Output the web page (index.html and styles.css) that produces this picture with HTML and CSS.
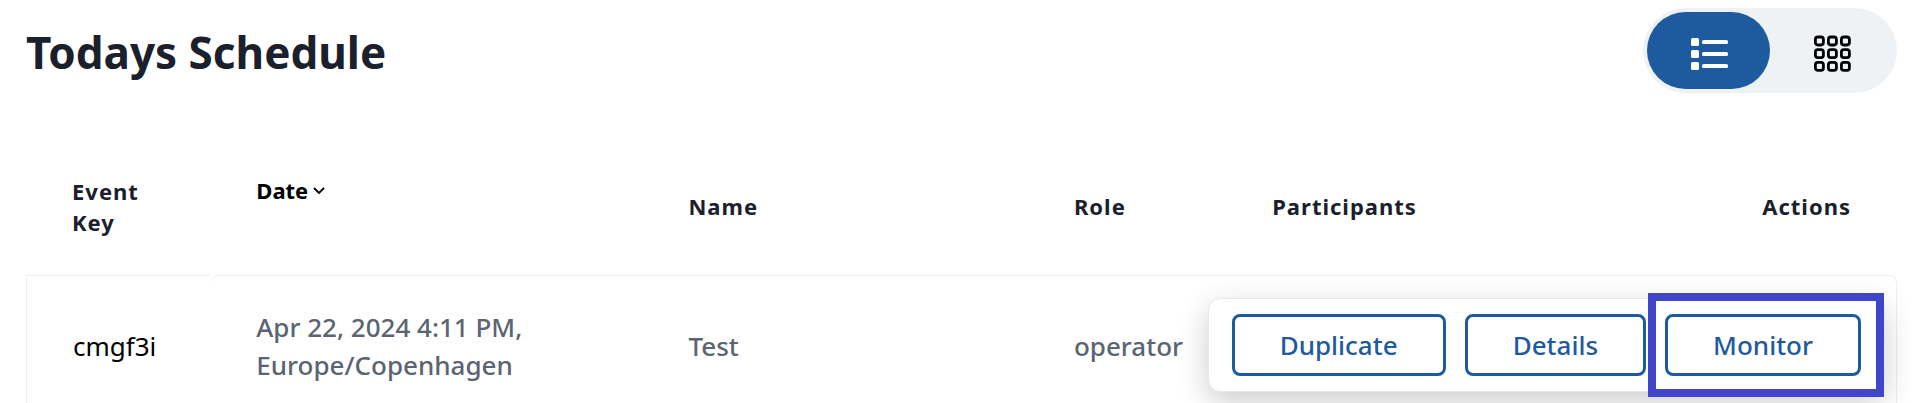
FILE: index.html
```html
<!DOCTYPE html>
<html lang="en">
<head>
    <meta charset="UTF-8">
    <meta name="viewport" content="width=device-width, initial-scale=1.0">
    <title>Todays Schedule</title>
    <link rel="stylesheet" href="styles.css">
</head>
<body>
    <div class="page">
        <header class="page-header">
            <h1>Todays Schedule</h1>
            <div class="view-toggle">
                <button type="button" class="view-btn active" aria-label="List view">
                    <svg width="38" height="38" viewBox="0 0 38 38" fill="currentColor">
                        <rect x="1" y="3" width="8" height="8" rx="1.5"/>
                        <rect x="1" y="15" width="8" height="8" rx="1.5"/>
                        <rect x="1" y="27" width="8" height="8" rx="1.5"/>
                        <rect x="12" y="5" width="26" height="4" rx="1.5"/>
                        <rect x="12" y="17" width="26" height="4" rx="1.5"/>
                        <rect x="12" y="29" width="26" height="4" rx="1.5"/>
                    </svg>
                </button>
                <button type="button" class="view-btn" aria-label="Grid view">
                    <svg width="38" height="38" viewBox="0 0 38 38" fill="none" stroke="currentColor" stroke-width="2.8">
                        <rect x="2.4" y="2" width="8" height="8" rx="2.4"/>
                        <rect x="15.4" y="2" width="8" height="8" rx="2.4"/>
                        <rect x="28.4" y="2" width="8" height="8" rx="2.4"/>
                        <rect x="2.4" y="14.7" width="8" height="8" rx="2.4"/>
                        <rect x="15.4" y="14.7" width="8" height="8" rx="2.4"/>
                        <rect x="28.4" y="14.7" width="8" height="8" rx="2.4"/>
                        <rect x="2.4" y="27.4" width="8" height="8" rx="2.4"/>
                        <rect x="15.4" y="27.4" width="8" height="8" rx="2.4"/>
                        <rect x="28.4" y="27.4" width="8" height="8" rx="2.4"/>
                    </svg>
                </button>
            </div>
        </header>

        <table class="schedule">
            <colgroup>
                <col class="col-key">
                <col class="col-date">
                <col class="col-name">
                <col class="col-role">
                <col class="col-participants">
                <col class="col-actions">
            </colgroup>
            <thead>
                <tr>
                    <th scope="col">Event Key</th>
                    <th scope="col" class="sorted">
                        <button type="button" class="sort-btn">Date
                            <svg width="12" height="8" viewBox="0 0 12 8" fill="none" stroke="currentColor" stroke-width="1.8">
                                <path d="M1 1l5 5 5-5"/>
                            </svg>
                        </button>
                    </th>
                    <th scope="col">Name</th>
                    <th scope="col">Role</th>
                    <th scope="col">Participants</th>
                    <th scope="col" class="actions-head">Actions</th>
                </tr>
            </thead>
            <tbody>
                <tr>
                    <td class="event-key">cmgf3i</td>
                    <td class="date">Apr 22, 2024 4:11 PM,<br>Europe/Copenhagen</td>
                    <td>Test</td>
                    <td>operator</td>
                    <td></td>
                    <td class="actions">
                        <div class="action-menu">
                            <button type="button" class="btn">Duplicate</button>
                            <button type="button" class="btn">Details</button>
                            <button type="button" class="btn highlight">Monitor</button>
                        </div>
                    </td>
                </tr>
            </tbody>
        </table>
    </div>
</body>
</html>
```

FILE: styles.css
```css
* { margin: 0; padding: 0; box-sizing: border-box; }
body {
    font-family: 'Segoe UI', 'Noto Sans', sans-serif;
    background: #fff; color: #1a202c;
    overflow-x: hidden;
}
button { font: inherit; cursor: pointer; }
.page { padding: 8px 15px 0 26px; }

.page-header { display: flex; justify-content: space-between; align-items: center; }
h1 { padding-top: 3px; font-size: 44px; line-height: 60px; font-weight: 700; }
.view-toggle {
    display: flex; padding: 4px; border-radius: 43px;
    background: #eef2f5;
}
.view-btn {
    display: flex; align-items: center; justify-content: center;
    width: 123px; height: 77px; padding-top: 6px; border: none; border-radius: 39px;
    background: transparent; color: #000;
}
.view-btn.active { background: #1e5a9e; color: #fff; }

.schedule {
    width: 100%; margin-top: 45px;
    table-layout: fixed; border-collapse: separate; border-spacing: 0;
}
.col-key { width: 9.85%; }
.col-date { width: 23.1%; }
.col-name { width: 20.6%; }
.col-role { width: 10.6%; }
.col-participants { width: 18%; }

th {
    height: 137px; padding: 0 46px; text-align: left; vertical-align: middle;
    font-size: 22px; line-height: 31px; font-weight: 700; letter-spacing: 1px;
}
.sorted { vertical-align: top; padding-top: 37px; }
.sort-btn {
    display: flex; align-items: center; gap: 5px;
    background: none; border: none; color: #000;
}
.actions-head { text-align: right; }

td {
    height: 140px; padding: 0 46px; border-top: 1px solid #edeff1;
    font-size: 26px; line-height: 38px; font-weight: 500; color: #5a6472;
}
td:first-child { border-left: 1px solid #edeff1; }
td:last-child { border-right: 1px solid #edeff1; border-top-right-radius: 8px; }
.event-key { color: #000; font-weight: 400; }
.date { border-top-left-radius: 8px; white-space: nowrap; }

.actions { position: relative; }
.action-menu {
    position: absolute; top: 22px; right: 11px;
    display: flex; gap: 19px; padding: 15px 23px;
    background: #fff; border: 1px solid #e2e8f0; border-radius: 12px;
    box-shadow: 0 10px 30px rgba(0,0,0,0.2);
}
.btn {
    position: relative; height: 62px; padding: 0 45px;
    background: #fff; color: #1e5a9e;
    border: 3px solid #1e5a9e; border-radius: 8px;
}
.highlight::after {
    content: ''; position: absolute; inset: -24px -26px -24px -20px;
    border: 8px solid #4046ca;
}
```
